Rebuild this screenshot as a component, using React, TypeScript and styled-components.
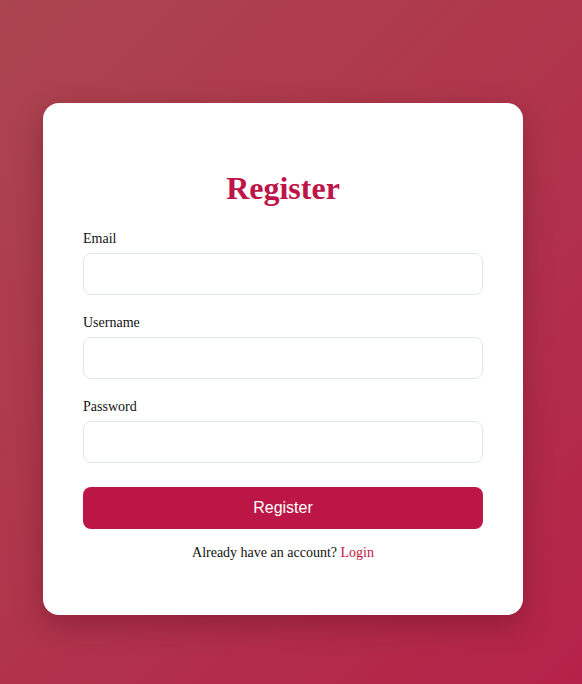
import React from "react";
import styled, { createGlobalStyle } from "styled-components";

const GlobalStyle = createGlobalStyle`
  html, body { margin: 0; padding: 0; }
  body {
    font-family: "Liberation Serif", "Times New Roman", serif;
    min-height: 684px;
  }
  * { box-sizing: border-box; }
`;

const Page = styled.div`
  min-height: 684px;
  display: flex;
  justify-content: center;
  align-items: flex-start;
  padding: 103px 16px 0 0;
  background: linear-gradient(135deg, #ab4550 0%, #b0354c 50%, #b52249 100%);
`;

const Card = styled.div`
  width: 480px;
  height: 512px;
  background: #ffffff;
  border-radius: 16px;
  padding: 40px 40px;
  box-shadow: 0 10px 30px rgba(60, 0, 15, 0.3);
  display: flex;
  flex-direction: column;
`;

const Title = styled.h1`
  margin: 27px 0 24px;
  font-family: "Liberation Serif", "Times New Roman", serif;
  font-size: 32px;
  font-weight: 700;
  color: #be1548;
  text-align: center;
  line-height: 37px;
`;

const Field = styled.div`
  display: flex;
  flex-direction: column;
  margin-bottom: 20px;
`;

const Label = styled.label`
  font-size: 14px;
  line-height: 16px;
  color: #111;
  margin-bottom: 6px;
`;

const Input = styled.input`
  height: 42px;
  width: 100%;
  border: 1px solid #e0e5ee;
  border-radius: 8px;
  padding: 0 12px;
  font-size: 14px;
  outline: none;
  background: #fff;
`;

const Button = styled.button`
  margin-top: 4px;
  height: 42px;
  width: 100%;
  border: none;
  border-radius: 8px;
  background: #bc1646;
  color: #ffffff;
  font-family: "Liberation Sans", Arial, sans-serif;
  font-size: 16px;
  cursor: pointer;
`;

const Footer = styled.p`
  margin: 16px 0 0;
  text-align: center;
  font-size: 14px;
  line-height: 16px;
  color: #111;
`;

const LoginLink = styled.a`
  color: #be1548;
  text-decoration: none;
`;

export default function App() {
  return (
    <>
      <GlobalStyle />
      <Page>
        <Card>
          <Title>Register</Title>
          <Field>
            <Label htmlFor="email">Email</Label>
            <Input id="email" type="email" />
          </Field>
          <Field>
            <Label htmlFor="username">Username</Label>
            <Input id="username" type="text" />
          </Field>
          <Field>
            <Label htmlFor="password">Password</Label>
            <Input id="password" type="password" />
          </Field>
          <Button type="button">Register</Button>
          <Footer>
            Already have an account? <LoginLink href="#">Login</LoginLink>
          </Footer>
        </Card>
      </Page>
    </>
  );
}
